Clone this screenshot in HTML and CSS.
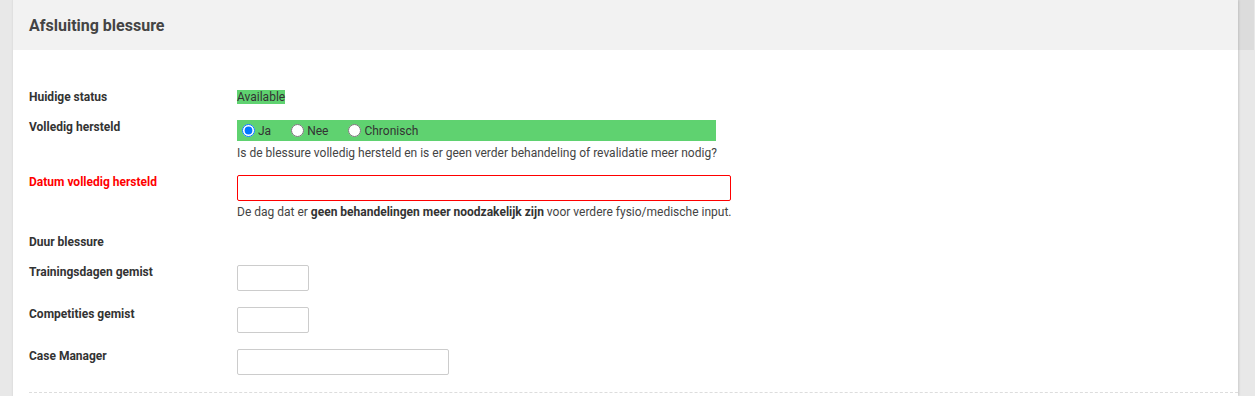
FILE: index.html
```html
<!DOCTYPE html>
<html lang="nl">
<head>
<meta charset="utf-8">
<title>Afsluiting blessure</title>
<link rel="stylesheet" href="styles.css">
</head>
<body>
<div class="page">
  <div class="card">
    <div class="card-header">
      <h2 class="card-title">Afsluiting blessure</h2>
    </div>
    <div class="card-body">
      <div class="form">
        <div class="row">
          <div class="label">Huidige status</div>
          <div class="value"><span class="status">Available</span></div>
        </div>
        <div class="row row-radio">
          <div class="label">Volledig hersteld</div>
          <div class="value">
            <div class="radio-group">
              <label class="radio"><input type="radio" name="hersteld" checked>Ja</label>
              <label class="radio"><input type="radio" name="hersteld">Nee</label>
              <label class="radio"><input type="radio" name="hersteld">Chronisch</label>
            </div>
            <div class="help help-radio">Is de blessure volledig hersteld en is er geen verder behandeling of revalidatie meer nodig?</div>
          </div>
        </div>
        <div class="row">
          <div class="label label-error">Datum volledig hersteld</div>
          <div class="value">
            <input type="text" class="input input-date input-error">
            <div class="help">De dag dat er <b>geen behandelingen meer noodzakelijk zijn</b> voor verdere fysio/medische input.</div>
          </div>
        </div>
        <div class="row">
          <div class="label">Duur blessure</div>
          <div class="value"></div>
        </div>
        <div class="row">
          <div class="label">Trainingsdagen gemist</div>
          <div class="value"><input type="text" class="input input-small"></div>
        </div>
        <div class="row">
          <div class="label">Competities gemist</div>
          <div class="value"><input type="text" class="input input-small"></div>
        </div>
        <div class="row row-last">
          <div class="label">Case Manager</div>
          <div class="value"><input type="text" class="input input-medium"></div>
        </div>
      </div>
      <div class="divider"></div>
    </div>
  </div>
  <div class="gutter">
    <div class="gutter-top"></div>
  </div>
</div>
</body>
</html>
```

FILE: styles.css
```css
html, body {
  margin: 0;
  padding: 0;
  height: 100%;
}
body {
  background: #e8e8e8;
  font-family: Roboto, "Liberation Sans", Arial, sans-serif;
  font-size: 12px;
  color: #333;
  overflow: hidden;
}
.page {
  display: flex;
  padding-left: 12px;
  min-height: 100%;
}
.card {
  width: 1225px;
  background: #fff;
  border-left: 1px solid #e0e0e0;
  box-shadow: 1px 0 2px rgba(0, 0, 0, 0.12);
  position: relative;
  z-index: 1;
}
.card-header {
  height: 50px;
  background: #f2f2f2;
  display: flex;
  align-items: center;
  padding: 0 16px;
}
.card-title {
  margin: 0;
  font-size: 16px;
  font-weight: 700;
  color: #444;
  line-height: 19px;
}
.card-body {
  padding: 40px 0 0 16px;
}
.form {
  display: flex;
  flex-direction: column;
}
.row {
  display: grid;
  grid-template-columns: 208px 1fr;
  margin-bottom: 16px;
}
.row-radio {
  margin-bottom: 15px;
}
.row-last {
  margin-bottom: 17px;
}
.label {
  font-weight: 700;
  line-height: 14px;
  color: #333;
}
.label-error {
  color: #f00;
}
.value {
  line-height: 14px;
}
.status {
  background: #5fd270;
  color: #333;
  display: inline-block;
  line-height: 14px;
}
.radio-group {
  width: 479px;
  height: 21px;
  background: #5fd270;
  display: flex;
  align-items: center;
  gap: 15px;
}
.radio {
  display: flex;
  align-items: center;
  color: #333;
  line-height: 14px;
}
.radio input {
  width: 13px;
  height: 13px;
  margin: 0 3px 0 5px;
}
.help {
  color: #444;
  margin-top: 4px;
  line-height: 14px;
}
.help b {
  color: #333;
}
.help-radio {
  margin-top: 5px;
}
.input {
  display: block;
  box-sizing: border-box;
  height: 26px;
  border: 1px solid #ccc;
  border-radius: 2px;
  background: #fff;
  padding: 0 6px;
  font: inherit;
  margin: 0;
}
.input-error {
  border-color: #f00;
}
.input-date {
  width: 494px;
}
.input-small {
  width: 72px;
}
.input-medium {
  width: 212px;
}
.divider {
  border-top: 1px dashed #ddd;
}
.gutter {
  width: 16px;
  display: flex;
  flex-direction: column;
}
.gutter-top {
  height: 50px;
  background: #dcdcdc;
}
```
